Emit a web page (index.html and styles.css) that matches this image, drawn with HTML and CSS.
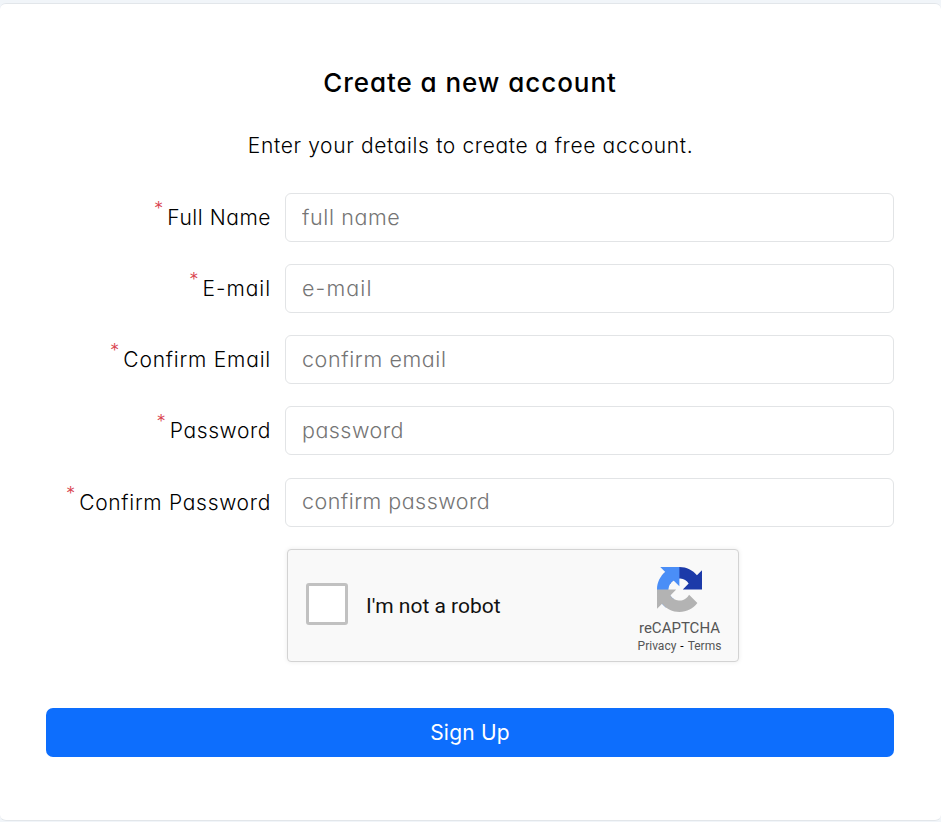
FILE: index.html
```html
<!DOCTYPE html>
<html lang="en">
<head>
<meta charset="utf-8">
<title>Create a new account</title>
<link rel="stylesheet" href="styles.css">
</head>
<body>
<main class="card">
  <h1 class="title"><span>Create a new account</span></h1>
  <p class="subtitle"><span>Enter your details to create a free account.</span></p>
  <form class="form">
    <div class="row"><label class="label" for="name"><span class="star">*</span><span class="l-name">Full Name</span></label><input class="input i-name" id="name" type="text" placeholder="full name"></div>
    <div class="row"><label class="label" for="email"><span class="star">*</span><span class="l-email">E-mail</span></label><input class="input i-email" id="email" type="text" placeholder="e-mail"></div>
    <div class="row"><label class="label" for="email2"><span class="star">*</span><span class="l-email2">Confirm Email</span></label><input class="input i-email2" id="email2" type="text" placeholder="confirm email"></div>
    <div class="row"><label class="label" for="pass"><span class="star">*</span><span class="l-pass">Password</span></label><input class="input i-pass" id="pass" type="password" placeholder="password"></div>
    <div class="row"><label class="label" for="pass2"><span class="star">*</span><span class="l-pass2">Confirm Password</span></label><input class="input i-pass2" id="pass2" type="password" placeholder="confirm password"></div>
    <div class="captcha">
      <span class="check"></span>
      <span class="robot">I'm not a robot</span>
      <div class="brand">
        <svg class="logo" viewBox="0 0 64 64" aria-hidden="true">
          <path fill="#1c3aa9" d="M64 31.955l-.033-1.37V4.687l-7.16 7.16C50.948 4.674 42.033.093 32.05.093c-10.4 0-19.622 4.96-25.458 12.64l11.736 11.86a15.55 15.55 0 0 1 4.754-5.334c2.05-1.6 4.952-2.906 8.968-2.906.485 0 .86.057 1.135.163 4.976.393 9.288 3.14 11.828 7.124l-8.307 8.307L64 31.953"/>
          <path fill="#4a8ef7" d="M31.862.094l-1.37.033H4.594l7.16 7.16C4.58 13.147 0 22.06 0 32.046c0 10.4 4.96 19.622 12.64 25.458L24.5 45.768a15.55 15.55 0 0 1-5.334-4.754c-1.6-2.05-2.906-4.952-2.906-8.968 0-.485.057-.86.163-1.135.393-4.976 3.14-9.288 7.124-11.828l8.307 8.307L31.86.095"/>
          <path fill="#b3b3b3" d="M0 32.045l.033 1.37v25.898l7.16-7.16c5.86 7.173 14.774 11.754 24.76 11.754 10.4 0 19.622-4.96 25.458-12.64l-11.736-11.86a15.55 15.55 0 0 1-4.754 5.334c-2.05 1.6-4.952 2.906-8.968 2.906-.485 0-.86-.057-1.135-.163-4.976-.393-9.288-3.14-11.828-7.124l8.307-8.307L0 32.045"/>
        </svg>
        <span class="brand-name">reCAPTCHA</span>
        <span class="legal">Privacy<b class="dash">-</b>Terms</span>
      </div>
    </div>
    <button class="submit" type="button">Sign Up</button>
  </form>
</main>
</body>
</html>
```
FILE: styles.css
```css
* { box-sizing: border-box; }
body {
  margin: 0;
  height: 822px;
  padding-top: 3px;
  overflow: hidden;
  background: #f1f5f9;
  color: #000;
  font-family: Inter, "Open Sans", sans-serif;
  font-feature-settings: "cv11";
  font-size: 21px;
  font-weight: 300;
}
.card {
  height: 818px;
  padding: 59px 46px 0 45px;
  background: #fff;
  border: solid #e2e6ea;
  border-width: 1px 0;
  border-radius: 6px;
}
.title {
  margin: 0;
  font-size: 26px;
  line-height: 40px;
  font-weight: 450;
  text-align: center;
  letter-spacing: 0.95px;
}
.subtitle {
  margin: 27px 0 0;
  padding-left: 1px;
  line-height: 32px;
  text-align: center;
  letter-spacing: 0.64px;
}
.form { padding-top: 31.15px; margin-left: 1px; }
.row {
  display: grid;
  grid-template-columns: 225px 609px;
  column-gap: 14px;
  height: 49px;
  margin-bottom: 22.1px;
}
.label {
  display: flex;
  justify-content: flex-end;
  line-height: 49px;
  white-space: nowrap;
}
.star {
  margin-right: 4px;
  line-height: 31px;
  color: #d9434e;
  font-size: 18.5px;
}
.l-name { letter-spacing: 0.55px; }
.l-email { letter-spacing: 0.95px; }
.l-email2 { letter-spacing: 0.78px; }
.l-pass { letter-spacing: 0.6px; }
.l-pass2 { letter-spacing: 0.7px; }
.input {
  width: 100%;
  height: 49px;
  padding: 0 16px 2px;
  border: 1px solid #e2e4e6;
  border-radius: 6px;
  background: #fff;
  color: #000;
  font: inherit;
  font-size: 21.5px;
  font-weight: 350;
  font-feature-settings: inherit;
}
.i-name, .i-email2 { letter-spacing: 0.6px; }
.i-email { letter-spacing: 1.1px; }
.i-pass, .i-pass2 { letter-spacing: 0.46px; }
.input::placeholder { color: #757575; opacity: 1; }
.captcha {
  display: flex;
  align-items: center;
  width: 452px;
  height: 113px;
  margin: 22.7px 0 0 241px;
  padding: 0 16px 0 18px;
  border: 1px solid #d3d3d3;
  border-radius: 4px;
  background: #f9f9f9;
  box-shadow: 0 0 5px rgba(0, 0, 0, 0.08);
  font-family: Roboto, sans-serif;
  font-weight: 400;
}
.check {
  width: 42px;
  height: 42px;
  margin-top: -3px;
  border: 3px solid #c1c1c1;
  border-radius: 3px;
  background: #fff;
}
.robot { margin-left: 18px; font-size: 21px; line-height: 24px; color: #111; }
.brand {
  display: flex;
  flex-direction: column;
  align-items: center;
  width: 85px;
  margin-left: auto;
  padding-top: 9px;
  color: #555;
}
.logo { width: 45px; height: 45px; margin-top: 2px; }
.brand-name { margin-top: 7px; font-size: 15px; line-height: 18px; }
.legal { font-size: 12px; line-height: 18px; white-space: nowrap; }
.dash { margin: 0 4px; color: #000; font-weight: 400; }
.submit {
  display: block;
  width: 848px;
  height: 49px;
  margin-top: 46px;
  padding: 0;
  border: 0;
  border-radius: 7px;
  background: #0d6efd;
  color: #fff;
  font: inherit;
  font-feature-settings: inherit;
  font-weight: 400;
  letter-spacing: 0.2px;
}
```
